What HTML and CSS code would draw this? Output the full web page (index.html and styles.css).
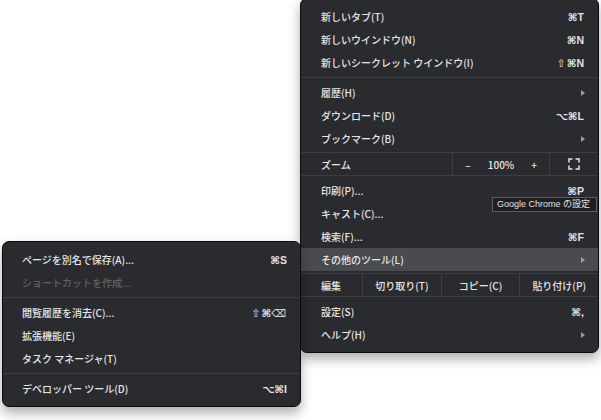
FILE: index.html
```html
<!DOCTYPE html>
<html lang="ja">
<head>
<meta charset="utf-8">
<title>Menu</title>
<link rel="stylesheet" href="styles.css">
</head>
<body>
<div class="canvas">
  <div class="menu main">
    <div class="item"><span>新しいタブ(T)</span><span class="key">⌘T</span></div>
    <div class="item"><span>新しいウインドウ(N)</span><span class="key">⌘N</span></div>
    <div class="item"><span>新しいシークレット ウインドウ(I)</span><span class="key"><span class="thin">⇧</span>⌘N</span></div>
    <div class="sep"></div>
    <div class="item"><span>履歴(H)</span><span class="arrow"></span></div>
    <div class="item"><span>ダウンロード(D)</span><span class="key">⌥⌘L</span></div>
    <div class="item"><span>ブックマーク(B)</span><span class="arrow"></span></div>
    <div class="zoom">
      <span class="zlabel">ズーム</span>
      <div class="zctrl"><span>–</span><span>100%</span><span>+</span></div>
      <div class="zfs">
        <svg width="12" height="12" viewBox="0 0 12 12" fill="none" stroke="#e4e4e4" stroke-width="1.5">
          <path d="M1 4.5V1H4.5M7.5 1H11V4.5M11 7.5V11H7.5M4.5 11H1V7.5"/>
        </svg>
      </div>
    </div>
    <div class="item"><span>印刷(P)...</span><span class="key">⌘P</span></div>
    <div class="item"><span>キャスト(C)...</span></div>
    <div class="item"><span>検索(F)...</span><span class="key">⌘F</span></div>
    <div class="item active"><span>その他のツール(L)</span><span class="arrow"></span></div>
    <div class="edit">
      <span class="elabel">編集</span>
      <span class="ecell">切り取り(T)</span>
      <span class="ecell">コピー(C)</span>
      <span class="ecell">貼り付け(P)</span>
    </div>
    <div class="item"><span>設定(S)</span><span class="key">⌘,</span></div>
    <div class="item"><span>ヘルプ(H)</span><span class="arrow"></span></div>
  </div>

  <div class="tooltip">Google Chrome の設定</div>

  <div class="menu sub">
    <div class="item"><span>ページを別名で保存(A)...</span><span class="key">⌘S</span></div>
    <div class="item disabled"><span>ショートカットを作成...</span></div>
    <div class="sep"></div>
    <div class="item"><span>閲覧履歴を消去(C)...</span><span class="key"><span class="thin">⇧</span>⌘<span class="thin">⌫</span></span></div>
    <div class="item"><span>拡張機能(E)</span></div>
    <div class="item"><span>タスク マネージャ(T)</span></div>
    <div class="sep"></div>
    <div class="item"><span>デベロッパー ツール(D)</span><span class="key">⌥⌘I</span></div>
  </div>
</div>
</body>
</html>
```

FILE: styles.css
```css
html, body {
  margin: 0;
  padding: 0;
  background: #ffffff;
}

.canvas {
  position: relative;
  width: 601px;
  height: 420px;
  overflow: hidden;
  background: #ffffff;
}

.menu {
  position: absolute;
  box-sizing: border-box;
  width: 299px;
  padding: 6px 0;
  background: #2a2b2f;
  border: 1px solid #0c0c0d;
  border-radius: 7px;
  box-shadow: 0 6px 12px rgba(0, 0, 0, 0.32);
  font-family: "Noto Sans CJK JP", "Noto Sans", sans-serif;
  font-size: 10px;
  font-weight: 500;
  color: #e6e6e6;
}

.main {
  left: 300px;
  top: -2px;
  z-index: 1;
}

.sub {
  left: 2px;
  top: 241px;
  z-index: 2;
}

.item {
  display: flex;
  align-items: center;
  justify-content: space-between;
  height: 23px;
  padding: 0 14px 0 20px;
  white-space: nowrap;
}

.sub .item {
  padding: 0 13px 0 19px;
}

.item.active {
  background: #4a4b4f;
}

.item.disabled {
  color: #606165;
}

.sep {
  height: 1px;
  margin: 3px 0;
  background: #3e3f43;
}

.key {
  font-family: "Liberation Sans", "DejaVu Sans", sans-serif;
  font-size: 10.5px;
  font-weight: 700;
  color: #e2e2e2;
}

.thin {
  font-family: "DejaVu Sans", sans-serif;
  font-weight: 400;
  margin-right: 1px;
}

.arrow {
  width: 0;
  height: 0;
  border-left: 4px solid #9a9b9e;
  border-top: 3px solid transparent;
  border-bottom: 3px solid transparent;
  margin-right: -1px;
}

.zoom,
.edit {
  display: flex;
  height: 22px;
  border-top: 1px solid #3e3f43;
  border-bottom: 1px solid #3e3f43;
  margin: 2px 0 3px;
}

.zlabel {
  flex: 1;
  display: flex;
  align-items: center;
  padding-left: 20px;
}

.zctrl {
  width: 96px;
  border-left: 1px solid #3e3f43;
  display: grid;
  grid-template-columns: 30px 36px 30px;
  align-items: center;
  justify-items: center;
}

.zfs {
  width: 48px;
  border-left: 1px solid #3e3f43;
  display: flex;
  align-items: center;
  justify-content: center;
}

.elabel {
  flex: 0 0 41px;
  display: flex;
  align-items: center;
  padding-left: 20px;
}

.ecell {
  flex: 1;
  border-left: 1px solid #3e3f43;
  display: flex;
  align-items: center;
  justify-content: center;
  white-space: nowrap;
}

.tooltip {
  position: absolute;
  left: 492px;
  top: 197px;
  z-index: 3;
  box-sizing: border-box;
  width: 105px;
  height: 15px;
  padding: 0 4px;
  background: #1e1e20;
  border: 1px solid #5c5d60;
  font-family: "Liberation Sans", "Noto Sans CJK JP", sans-serif;
  font-size: 9px;
  line-height: 13px;
  color: #e2e2e2;
  white-space: nowrap;
}
```
